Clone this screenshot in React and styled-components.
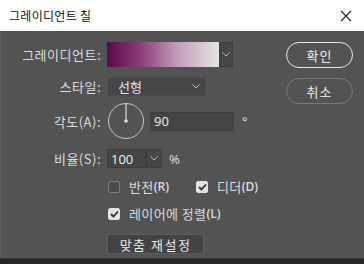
import React from "react";
import styled, { createGlobalStyle } from "styled-components";

const GlobalStyle = createGlobalStyle`
  html, body {
    margin: 0;
    padding: 0;
    background: #2b2b2b;
  }
  body {
    font-family: "Noto Sans CJK KR", "Noto Sans", sans-serif;
  }
`;

const Window = styled.div`
  width: 364px;
  height: 264px;
  display: flex;
  flex-direction: column;
  overflow: hidden;
`;

const TitleBar = styled.div`
  height: 31px;
  background: #ffffff;
  display: flex;
  align-items: center;
  justify-content: space-between;
  padding: 0 8px 0 9px;
  flex-shrink: 0;
`;

const Title = styled.div`
  font-size: 12px;
  color: #111;
  letter-spacing: 0.3px;
`;

const Close = styled.div`
  width: 14px;
  height: 14px;
  display: flex;
  align-items: center;
  justify-content: center;
  margin-right: 3px;
`;

const Body = styled.div`
  flex: 1;
  background: #535353;
  border-left: 1px solid #5f5f5f;
  display: flex;
  justify-content: space-between;
  padding: 11px 11px 0 0;
`;

const Footer = styled.div`
  height: 5px;
  background: #262626;
  border-top: 1px solid #3a3a3a;
  flex-shrink: 0;
`;

const Form = styled.div`
  display: flex;
  flex-direction: column;
`;

const Row = styled.div`
  display: grid;
  grid-template-columns: 100px auto;
  column-gap: 6px;
  align-items: center;
  margin-top: ${p => p.$gap || 0}px;
`;

const Label = styled.div`
  text-align: right;
  font-size: 13px;
  letter-spacing: 0.5px;
  color: #dcdcdc;
  line-height: 1;
`;

const Inline = styled.div`
  display: flex;
  align-items: center;
`;

const Swatch = styled.div`
  width: 112px;
  height: 25px;
  background: linear-gradient(to right, #5a0848 0%, #8a3e76 30%, #c6a3bb 65%, #e6e2e4 100%);
`;

const ArrowBox = styled.div`
  width: ${p => p.$w || 14}px;
  height: ${p => p.$h || 25}px;
  background: #464646;
  border: 1px solid #3e3e3e;
  box-sizing: border-box;
  display: flex;
  align-items: center;
  justify-content: center;
`;

const Select = styled.div`
  width: 99px;
  height: 19px;
  box-sizing: border-box;
  background: #464646;
  border: 1px solid #4c4c4c;
  display: flex;
  align-items: center;
  justify-content: space-between;
  padding: 0 5px 0 10px;
  font-size: 13px;
  color: #e6e6e6;
`;

const Dial = styled.svg`
  display: block;
`;

const Field = styled.div`
  width: ${p => p.$w}px;
  height: 19px;
  box-sizing: border-box;
  background: #454545;
  border: 1px solid #3d3d3d;
  font-family: "Open Sans", "Noto Sans", sans-serif;
  font-size: 13px;
  color: #f0f0f0;
  display: flex;
  align-items: center;
  padding-left: 3px;
`;

const Unit = styled.span`
  font-family: "Noto Sans", sans-serif;
  font-size: 13px;
  color: #dcdcdc;
  margin-left: ${p => p.$ml}px;
`;

const Checks = styled.div`
  display: flex;
  align-items: center;
  margin-left: 107px;
  margin-top: ${p => p.$gap}px;
`;

const CheckItem = styled.label`
  display: flex;
  align-items: center;
  width: ${p => p.$w || "auto"};
  font-size: 13px;
  color: #dcdcdc;
  letter-spacing: 0.4px;
  line-height: 1;
`;

const Box = styled.span`
  width: 12px;
  height: 12px;
  box-sizing: border-box;
  border-radius: 2px;
  margin-right: 9px;
  display: flex;
  align-items: center;
  justify-content: center;
  background: ${p => (p.$on ? "#e2e2e2" : "#4b4b4b")};
  border: 1px solid ${p => (p.$on ? "#e2e2e2" : "#7c7c7c")};
`;

const Key = styled.span`
  font-family: "Open Sans", "Noto Sans", sans-serif;
  font-weight: 600;
  font-size: 12px;
  letter-spacing: 0;
`;

const ResetButton = styled.div`
  margin-left: 106px;
  margin-top: 14px;
  width: 97px;
  height: 20px;
  box-sizing: border-box;
  background: #434343;
  border: 1px solid #5c5c5c;
  display: flex;
  align-items: center;
  justify-content: center;
  font-size: 13px;
  letter-spacing: 1.5px;
  color: #e8e8e8;
`;

const Actions = styled.div`
  display: flex;
  flex-direction: column;
  gap: 10px;
`;

const PillButton = styled.div`
  width: 67px;
  height: 26px;
  box-sizing: border-box;
  border-radius: 13px;
  border: ${p => (p.$primary ? "1.5px solid #e6e6e6" : "1px solid #7a7a7a")};
  display: flex;
  align-items: center;
  justify-content: center;
  font-size: 13px;
  letter-spacing: 1px;
  color: #ececec;
`;

function Chevron() {
  return (
    <svg width="8" height="5" viewBox="0 0 8 5">
      <path d="M0.5 0.5 L4 4 L7.5 0.5" fill="none" stroke="#bdbdbd" strokeWidth="1" />
    </svg>
  );
}

function Check() {
  return (
    <svg width="9" height="8" viewBox="0 0 9 8">
      <path d="M1 4 L3.5 6.5 L8 1.5" fill="none" stroke="#2e2e2e" strokeWidth="1.8" />
    </svg>
  );
}

export default function App() {
  return (
    <>
      <GlobalStyle />
      <Window>
        <TitleBar>
          <Title>그레이디언트 칠</Title>
          <Close>
            <svg width="12" height="12" viewBox="0 0 12 12">
              <path d="M1 1 L11 11 M11 1 L1 11" stroke="#222" strokeWidth="1.1" />
            </svg>
          </Close>
        </TitleBar>
        <Body>
          <Form>
            <Row>
              <Label>그레이디언트:</Label>
              <Inline>
                <Swatch />
                <ArrowBox $w={14} $h={25}>
                  <Chevron />
                </ArrowBox>
              </Inline>
            </Row>
            <Row $gap={10}>
              <Label>스타일:</Label>
              <Select>
                <span>선형</span>
                <Chevron />
              </Select>
            </Row>
            <Row $gap={6}>
              <Label>각도(A):</Label>
              <Inline>
                <Dial width="38" height="38" viewBox="0 0 38 38">
                  <circle cx="19" cy="19" r="17.5" fill="none" stroke="#c4c4c4" strokeWidth="1" />
                  <line x1="19" y1="19" x2="19" y2="2" stroke="#d8d8d8" strokeWidth="1.2" />
                  <circle cx="19" cy="19" r="1.8" fill="#e0e0e0" />
                </Dial>
                <Field $w={84} style={{ marginLeft: 5 }}>90</Field>
                <Unit $ml={8}>°</Unit>
              </Inline>
            </Row>
            <Row $gap={9}>
              <Label>비율(S):</Label>
              <Inline>
                <Field $w={39}>100</Field>
                <ArrowBox $w={16} $h={19}>
                  <Chevron />
                </ArrowBox>
                <Unit $ml={7}>%</Unit>
              </Inline>
            </Row>
            <Checks $gap={12}>
              <CheckItem $w="88px">
                <Box />
                반전<Key>(R)</Key>
              </CheckItem>
              <CheckItem>
                <Box $on>
                  <Check />
                </Box>
                디더<Key>(D)</Key>
              </CheckItem>
            </Checks>
            <Checks $gap={14}>
              <CheckItem>
                <Box $on>
                  <Check />
                </Box>
                레이어에 정렬<Key>(L)</Key>
              </CheckItem>
            </Checks>
            <ResetButton>맞춤 재설정</ResetButton>
          </Form>
          <Actions>
            <PillButton $primary>확인</PillButton>
            <PillButton>취소</PillButton>
          </Actions>
        </Body>
        <Footer />
      </Window>
    </>
  );
}
